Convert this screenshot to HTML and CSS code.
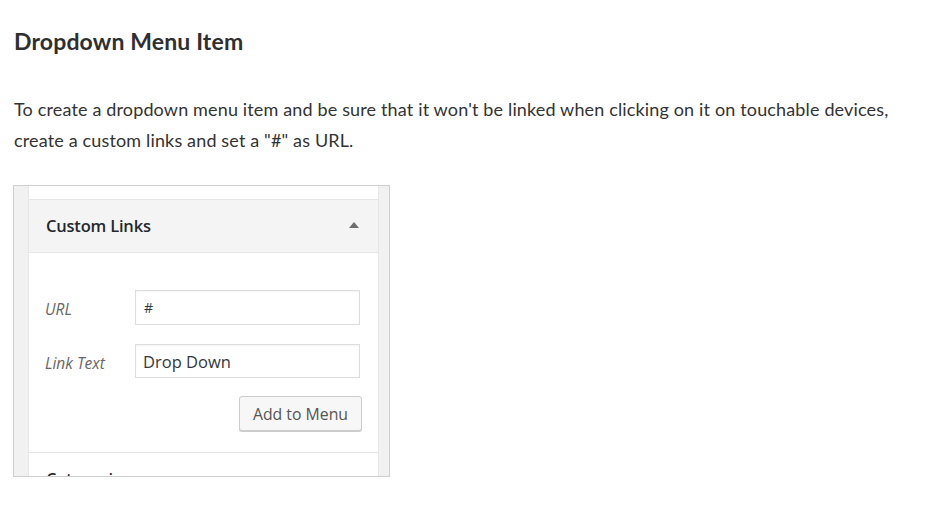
FILE: index.html
```html
<!DOCTYPE html>
<html lang="en">
<head>
<meta charset="utf-8">
<title>Dropdown Menu Item</title>
<link rel="stylesheet" href="styles.css">
</head>
<body>
<main class="doc">
  <h2 class="doc-title">Dropdown Menu Item</h2>
  <p class="doc-text">To create a dropdown menu item and be sure that it won't be linked when clicking on it on touchable devices, create a custom links and set a "#" as URL.</p>
  <div class="shot">
    <div class="shot-side shot-left"></div>
    <div class="shot-col">
      <div class="shot-top"></div>
      <div class="panel-head">
        <span class="panel-title">Custom Links</span>
        <span class="panel-arrow"></span>
      </div>
      <div class="panel-body">
        <div class="field">
          <span class="field-label">URL</span>
          <span class="field-input">#</span>
        </div>
        <div class="field">
          <span class="field-label">Link Text</span>
          <span class="field-input field-input-big">Drop Down</span>
        </div>
        <div class="actions">
          <span class="btn">Add to Menu</span>
        </div>
      </div>
      <div class="panel-next"><span class="panel-next-title">Categories</span></div>
    </div>
    <div class="shot-side shot-right"></div>
  </div>
</main>
</body>
</html>
```

FILE: styles.css
```css
* { box-sizing: border-box; }
html, body { margin: 0; padding: 0; background: #fff; }
body { font-family: "Lato", "Liberation Sans", sans-serif; color: #333; }

.doc { padding: 28px 0 0 14px; width: 920px; }

.doc-title {
  margin: 0;
  font-size: 23px;
  line-height: 26px;
  font-weight: 700;
  letter-spacing: 0.15px;
  color: #2f2f2f;
}

.doc-text {
  margin: 40px 0 0;
  font-size: 18px;
  line-height: 31px;
  letter-spacing: 0.15px;
  color: #333;
}

.shot {
  margin: 29px 0 0 -1px;
  width: 377px;
  height: 292px;
  border: 1px solid #cfcfcf;
  display: flex;
  overflow: hidden;
  background: #f1f1f1;
  font-family: "Open Sans", "Liberation Sans", sans-serif;
}
.shot-side { background: #f1f1f1; flex: none; }
.shot-left { width: 15px; border-right: 1px solid #e6e6e6; }
.shot-right { width: 11px; border-left: 1px solid #e6e6e6; }
.shot-col { flex: 1; background: #fff; display: flex; flex-direction: column; }

.shot-top { height: 14px; border-bottom: 1px solid #e5e5e5; flex: none; }

.panel-head {
  height: 53px;
  flex: none;
  background: #f4f4f4;
  border-bottom: 1px solid #e5e5e5;
  display: flex;
  align-items: center;
  justify-content: space-between;
  padding: 0 19px 2px 17px;
}
.panel-title { font-size: 16.5px; font-weight: 600; color: #23282d; letter-spacing: -0.2px; }
.panel-arrow {
  width: 0; height: 0;
  border-left: 5px solid transparent;
  border-right: 5px solid transparent;
  border-bottom: 6px solid #6e6e6e;
}

.panel-body {
  flex: none;
  height: 200px;
  border-bottom: 1px solid #e5e5e5;
  padding: 37px 17px 0 16px;
}
.field { display: flex; align-items: center; margin-bottom: 19px; }
.field-label {
  width: 90px;
  font-size: 15.5px;
  font-style: italic;
  color: #666;
  padding-top: 3px;
}
.field-input {
  width: 225px;
  height: 35px;
  border: 1px solid #ddd;
  box-shadow: inset 0 1px 2px rgba(0,0,0,0.05);
  display: flex;
  align-items: center;
  padding: 0 8px;
  font-size: 14px;
  color: #32373c;
}
.field-input-big { font-size: 16.5px; height: 34px; padding: 0 7px; }

.actions { display: flex; justify-content: flex-end; margin-top: -1px; }
.btn {
  width: 123px;
  height: 35px;
  border: 1px solid #ccc;
  border-radius: 3px;
  background: #f7f7f7;
  box-shadow: 0 1px 0 #ccc;
  display: flex;
  align-items: center;
  justify-content: center;
  font-size: 15.8px;
  color: #555;
  margin-right: -1px;
}

.panel-next { padding: 14px 0 0 17px; }
.panel-next-title { font-size: 16.5px; font-weight: 600; color: #23282d; }
```
